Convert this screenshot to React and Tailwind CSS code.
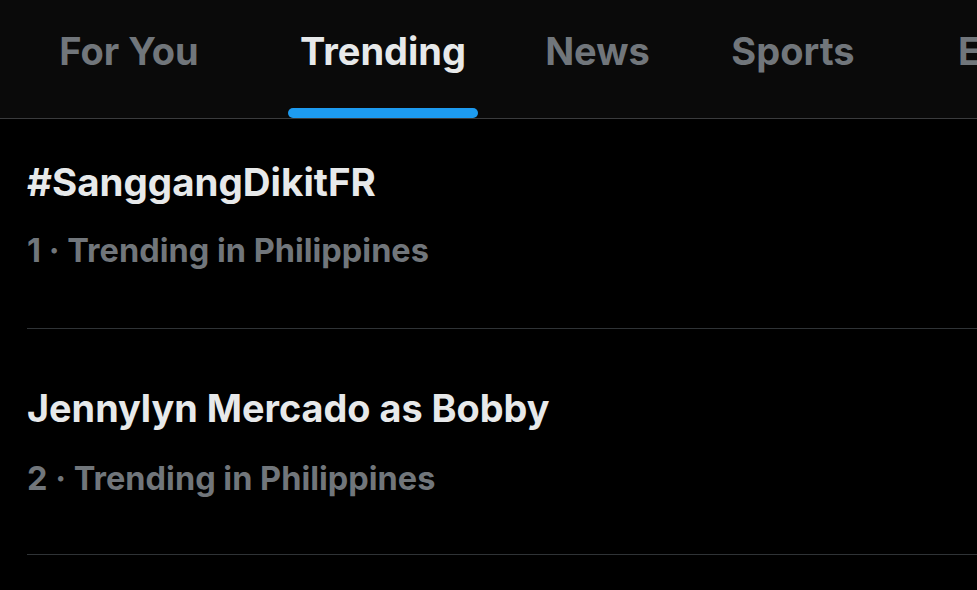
import React from "react";

const tabs = [
  { label: "For You", w: "w-[258px]" },
  { label: "Trending", w: "w-[250px]", active: true },
  { label: "News", w: "w-[179px]" },
  { label: "Sports", w: "w-[212px]" },
];

export default function App() {
  return (
    <div className="w-[977px] h-[590px] overflow-hidden bg-black" style={{ fontFamily: "Inter, 'Noto Sans', sans-serif" }}>
      <div className="h-[119px] bg-[#0a0a0a] border-b border-[#3a3b3d] flex overflow-hidden">
        {tabs.map((t) => (
          <div key={t.label} className={`${t.w} shrink-0 flex flex-col items-center justify-between`}>
            <div
              className={`pt-[27px] text-[38px] leading-[48px] font-bold whitespace-nowrap ${
                t.active ? "text-[#e7e9ea]" : "text-[#71767b]"
              }`}
            >
              {t.label}
            </div>
            {t.active ? <div className="w-[190px] h-[10px] rounded-full bg-[#1d9bf0]" /> : <div />}
          </div>
        ))}
        <div className="shrink-0 pl-[59px] pt-[27px] text-[38px] leading-[48px] font-bold whitespace-nowrap text-[#71767b]">
          Entertainment
        </div>
      </div>
      <div className="pl-[27px]">
        <div className="pt-[39px] pb-[57px] border-b border-[#2f3336]">
          <div className="text-[38.5px] leading-[48px] font-bold text-[#e7e9ea]">#SanggangDikitFR</div>
          <div className="mt-[25px] text-[32.5px] leading-[40px] font-bold text-[#71767b]">1 · Trending in Philippines</div>
        </div>
        <div className="pt-[55px] pb-[55px] border-b border-[#2f3336]">
          <div className="text-[37.8px] leading-[48px] font-bold text-[#e7e9ea]">Jennylyn Mercado as Bobby</div>
          <div className="mt-[27px] text-[32.5px] leading-[40px] font-bold text-[#71767b]">2 · Trending in Philippines</div>
        </div>
      </div>
    </div>
  );
}
